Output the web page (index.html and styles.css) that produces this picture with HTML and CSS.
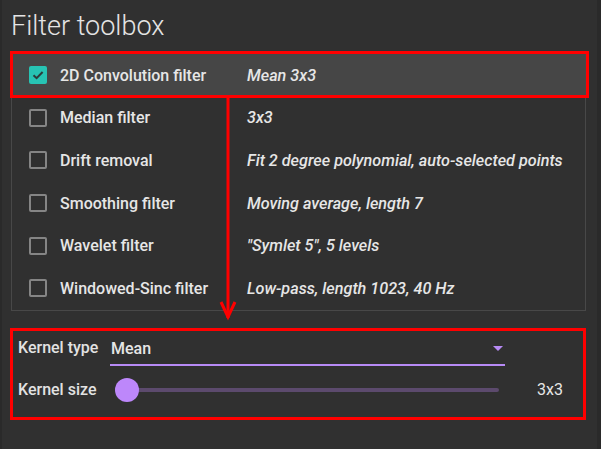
FILE: index.html
```html
<!DOCTYPE html>
<html>
<head>
<meta charset="utf-8">
<link rel="stylesheet" href="styles.css">
</head>
<body>
<div class="panel">
  <h1 class="title">Filter toolbox</h1>
  <div class="list">
    <div class="row active">
      <span class="check checked"><svg viewBox="0 0 18 18" width="18" height="18"><path d="M4.5 9.2 L7.6 12.2 L13.6 6" fill="none" stroke="#2d3b3a" stroke-width="2"/></svg></span>
      <span class="name">2D Convolution filter</span>
      <span class="desc">Mean 3x3</span>
    </div>
    <div class="row">
      <span class="check"></span>
      <span class="name">Median filter</span>
      <span class="desc">3x3</span>
    </div>
    <div class="row">
      <span class="check"></span>
      <span class="name">Drift removal</span>
      <span class="desc">Fit 2 degree polynomial, auto-selected points</span>
    </div>
    <div class="row">
      <span class="check"></span>
      <span class="name">Smoothing filter</span>
      <span class="desc">Moving average, length 7</span>
    </div>
    <div class="row">
      <span class="check"></span>
      <span class="name">Wavelet filter</span>
      <span class="desc">"Symlet 5", 5 levels</span>
    </div>
    <div class="row">
      <span class="check"></span>
      <span class="name">Windowed-Sinc filter</span>
      <span class="desc">Low-pass, length 1023, 40 Hz</span>
    </div>
  </div>
  <div class="settings">
    <div class="srow">
      <span class="slabel">Kernel type</span>
      <div class="select">
        <span class="sval">Mean</span>
        <span class="caret"></span>
      </div>
    </div>
    <div class="srow">
      <span class="slabel">Kernel size</span>
      <div class="slider">
        <div class="track"></div>
        <div class="thumb"></div>
      </div>
      <span class="value">3x3</span>
    </div>
  </div>
  <div class="mark mark-row"></div>
  <div class="mark mark-settings"></div>
  <svg class="arrow" width="20" height="224" viewBox="0 0 20 224">
    <path d="M10 0 V220" stroke="#ff0000" stroke-width="3" fill="none"/>
    <path d="M3 204 L10 219 L17 204" stroke="#ff0000" stroke-width="3" fill="none"/>
  </svg>
</div>
</body>
</html>
```

FILE: styles.css
```css
* { box-sizing: border-box; }
html, body { margin: 0; padding: 0; }
body {
  background: #2a2a2a;
  width: 601px;
  height: 449px;
  overflow: hidden;
  font-family: Roboto, "Liberation Sans", sans-serif;
  color: #e2e2e2;
}
.panel {
  position: relative;
  margin-left: 2px;
  width: 595px;
  height: 449px;
  background: #303030;
  padding-top: 8px;
}
.title {
  margin: 0 0 0 9px;
  font-size: 27px;
  font-weight: 300;
  line-height: 36px;
  height: 45px;
  color: #e4e4e4;
}
.list {
  margin-left: 9px;
  width: 575px;
  border: 1px solid #484848;
}
.row {
  display: flex;
  align-items: center;
  height: 42.6px;
  padding-left: 17px;
  font-size: 16px;
}
.row.active { background: #464646; }
.check {
  width: 18px;
  height: 18px;
  border: 2px solid #858585;
  border-radius: 2px;
  flex: none;
  display: flex;
}
.check.checked {
  background: #27c3b3;
  border: none;
}
.name {
  margin-left: 13px;
  width: 187px;
  font-weight: 500;
  color: #e6e6e6;
}
.desc {
  font-size: 16.2px;
  font-style: italic;
  font-weight: 500;
  color: #e6e6e6;
}
.settings {
  margin-top: 16px;
  padding-left: 16px;
}
.srow {
  display: flex;
  align-items: center;
  height: 42px;
  font-size: 16px;
}
.slabel {
  width: 92px;
  font-weight: 500;
  color: #e2e2e2;
}
.select {
  position: relative;
  width: 395px;
  height: 32px;
  display: flex;
  align-items: center;
  border-bottom: 2px solid #b78af5;
  padding-left: 1px;
  margin-top: 4px;
}
.sval { font-weight: 500; color: #e6e6e6; }
.caret {
  position: absolute;
  right: 2px;
  top: 12px;
  width: 0;
  height: 0;
  border-left: 5px solid transparent;
  border-right: 5px solid transparent;
  border-top: 5px solid #b78af5;
}
.slider {
  position: relative;
  margin-left: 5px;
  width: 396px;
  height: 24px;
}
.track {
  position: absolute;
  left: 12px;
  right: 12px;
  top: 10px;
  height: 4px;
  border-radius: 2px;
  background: #5c4a6d;
}
.thumb {
  position: absolute;
  left: 0;
  top: 0;
  width: 24px;
  height: 24px;
  border-radius: 50%;
  background: #bd87fb;
}
.value {
  margin-left: 26px;
  font-weight: 400;
  color: #e6e6e6;
}
.mark {
  position: absolute;
  border: 3px solid #ff0000;
}
.mark-row {
  left: 8px;
  top: 51px;
  width: 579px;
  height: 47px;
}
.mark-settings {
  left: 8px;
  top: 328px;
  width: 576px;
  height: 92px;
}
.arrow {
  position: absolute;
  left: 216px;
  top: 98px;
}
```
